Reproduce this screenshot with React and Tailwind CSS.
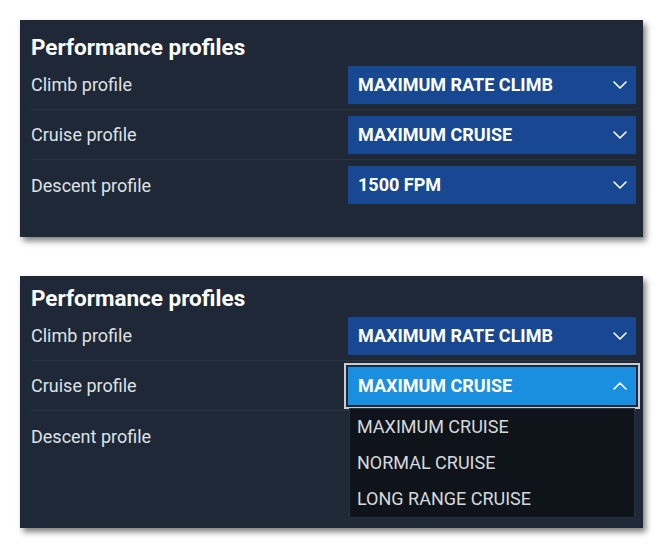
import React from "react";

const Chevron = ({ up = false }) => (
  <svg width="14" height="8" viewBox="0 0 14 8" fill="none" className={up ? "rotate-180" : ""}>
    <polyline points="1,1 7,7 13,1" stroke="white" strokeWidth="1.6" strokeLinecap="round" strokeLinejoin="round" />
  </svg>
);

function Select({ value, open = false, options = [] }) {
  return (
    <div className="relative w-[288px] h-[38px]">
      <div
        className={
          open
            ? "h-full flex items-center justify-between pl-[10px] pr-[9px] bg-[#1a8fe0] outline-2 outline-offset-2 outline-[#c9cdd2]"
            : "h-full flex items-center justify-between pl-[10px] pr-[9px] bg-[#174891]"
        }
      >
        <span className="text-[18px] font-bold text-white leading-none">{value}</span>
        <Chevron up={open} />
      </div>
      {open && (
        <div className="absolute left-[1px] right-[1px] top-[41px] z-10 bg-[#0f141a] border border-[#2a323c]">
          {options.map((o) => (
            <div key={o} className="h-[36px] flex items-center pl-[7px] text-[18px] text-[#d6d9dd]">
              {o}
            </div>
          ))}
        </div>
      )}
    </div>
  );
}

function Row({ label, children, last = false }) {
  return (
    <div
      className={
        last
          ? "h-[50px] flex items-center justify-between"
          : "h-[50px] flex items-center justify-between border-b border-[#2c3542]"
      }
    >
      <span className="text-[18px] text-[#dfe2e6]">{label}</span>
      {children}
    </div>
  );
}

function Panel({ className, open }) {
  return (
    <div className={"w-[623px] bg-[#1e2836] pl-[11px] pr-[7px] shadow-[3px_4px_6px_rgba(0,0,0,0.5)] " + className}>
      <h2 className="text-[22.5px] leading-[26px] font-bold text-white">Performance profiles</h2>
      <Row label="Climb profile">
        <Select value="MAXIMUM RATE CLIMB" />
      </Row>
      <Row label="Cruise profile">
        <Select
          value="MAXIMUM CRUISE"
          open={open}
          options={["MAXIMUM CRUISE", "NORMAL CRUISE", "LONG RANGE CRUISE"]}
        />
      </Row>
      <Row label="Descent profile" last>
        {!open && <Select value="1500 FPM" />}
      </Row>
    </div>
  );
}

export default function App() {
  return (
    <div className="w-[664px] h-[549px] bg-white pl-[20px] pt-[20px] flex flex-col gap-[39px] font-['Roboto',sans-serif]">
      <Panel className="h-[217px] pt-[14px]" />
      <Panel className="h-[252px] pt-[9px]" open />
    </div>
  );
}
